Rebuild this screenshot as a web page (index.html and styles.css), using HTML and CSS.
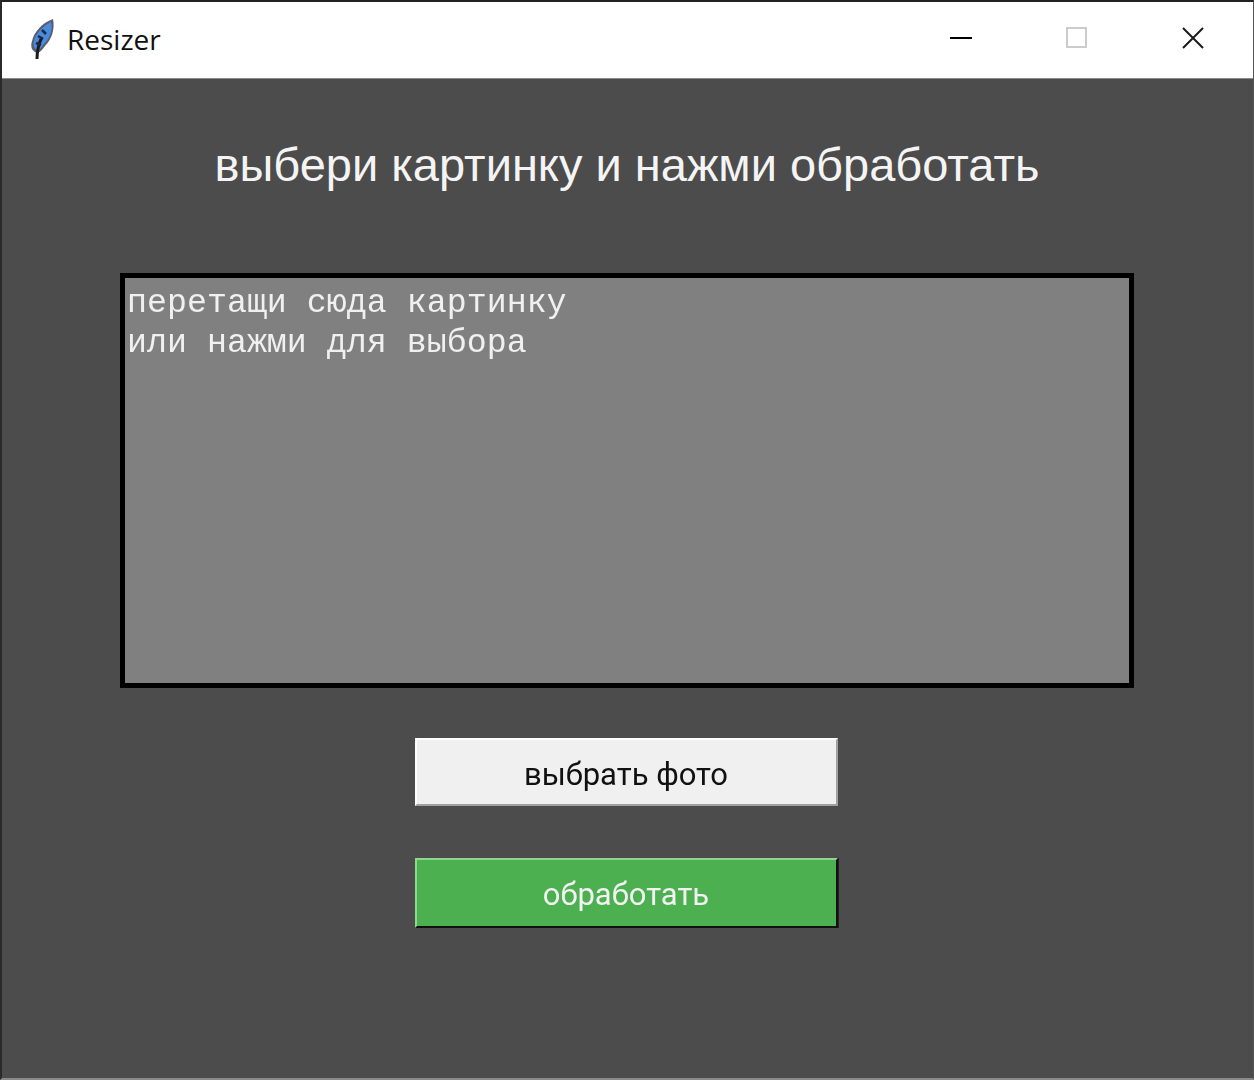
FILE: index.html
```html
<!DOCTYPE html>
<html lang="ru">
<head>
<meta charset="utf-8">
<title>Resizer</title>
<link rel="stylesheet" href="styles.css">
</head>
<body>
<div class="window">
  <header class="titlebar">
    <svg class="app-icon" width="28" height="42" viewBox="0 0 28 42" aria-hidden="true">
      <path class="quill-outline" d="M25 0 C27 10 24 20 17 27 C14 31 12 33 10 34 C4 33 2 28 4 22 C6 13 14 4 25 0Z"/>
      <path class="quill-vane" d="M23 3 C25 11 22 19 16 25 C14 28 12 30 10 31 C6 30 5 27 6 22 C8 14 15 7 23 3Z"/>
      <path class="quill-shaft" d="M9 40 C9 32 11 24 14 18"/>
      <path class="quill-mark" d="M8 24 L13 26 M10 17 L15 20 M14 11 L18 15"/>
    </svg>
    <span class="app-name">Resizer</span>
    <div class="controls">
      <div class="control"><svg width="22" height="22" viewBox="0 0 22 22"><path class="ctl-min" d="M0 11H22"/></svg></div>
      <div class="control"><svg width="22" height="22" viewBox="0 0 22 22"><rect class="ctl-max" x="1" y="1" width="19" height="19"/></svg></div>
      <div class="control"><svg width="22" height="22" viewBox="0 0 22 22"><path class="ctl-close" d="M1 1L21 21M21 1L1 21"/></svg></div>
    </div>
  </header>
  <main class="content">
    <h1 class="heading">выбери картинку и нажми обработать</h1>
    <div class="dropzone"><span class="soft">перетащи сюда картинку
или нажми для выбора</span></div>
    <button class="btn btn-light" type="button"><span class="soft">выбрать фото</span></button>
    <button class="btn btn-green" type="button"><span class="soft">обработать</span></button>
  </main>
</div>
</body>
</html>
```

FILE: styles.css
```css
* { box-sizing: border-box; }
html, body { margin: 0; padding: 0; }
body { width: 1254px; height: 1080px; overflow: hidden; background: #4c4c4c; }

.window {
  width: 1254px;
  height: 1080px;
  display: flex;
  flex-direction: column;
  border-top: 2px solid #222;
  border-left: 2px solid #2a2a2a;
  border-right: 1px solid #555;
  border-bottom: 2px solid #8a8a8a;
}

.titlebar {
  flex: 0 0 77px;
  display: flex;
  align-items: center;
  background: #fff;
  border-bottom: 1px solid #8a8a8a;
  padding-left: 26px;
}
.app-icon { flex: none; margin-top: -1px; }
.app-name {
  margin: -2px 0 0 11px;
  font: 28px "Open Sans", "Noto Sans", sans-serif;
  color: #111;
}
.quill-outline { fill: #56606e; }
.quill-vane { fill: #4a8ade; }
.quill-shaft { fill: none; stroke: #1c1c1c; stroke-width: 3; }
.quill-mark { fill: none; stroke: #1b2a40; stroke-width: 2.5; }

.controls { margin-left: auto; display: flex; margin-top: -5px; padding-right: 2px; }
.control { width: 116px; display: flex; justify-content: center; align-items: center; }
.control svg { display: block; }
.ctl-min { stroke: #000; stroke-width: 2; fill: none; }
.ctl-max { stroke: #ccc; stroke-width: 2; fill: none; }
.ctl-close { stroke: #1a1a1a; stroke-width: 2; fill: none; }

.content {
  flex: 1;
  display: flex;
  flex-direction: column;
  align-items: center;
  background: #4c4c4c;
  padding-right: 1px;
}
.heading {
  margin: 56px 0 0;
  height: 60px;
  font: 400 47px/60px "Liberation Sans", Arial, sans-serif;
  color: #f4f4f4;
  white-space: nowrap;
}
.dropzone {
  width: 1014px;
  height: 415px;
  margin-top: 78px;
  border: 5px solid #000;
  background: #808080;
  padding: 5px 2px;
  font: 33.3px/40px "Liberation Mono", "Courier New", monospace;
  color: #f0f0f0;
  white-space: pre;
}
.soft { filter: blur(0.4px); display: inline-block; }
.btn {
  display: block;
  width: 423px;
  margin-right: 2px;
  font: 31px "Roboto", "Liberation Sans", sans-serif;
}
.btn-light {
  height: 68px;
  margin-top: 50px;
  padding: 4px 0 0;
  background: #f0f0f0;
  color: #111;
  border: 2px solid;
  border-color: #fff #a0a0a0 #a0a0a0 #fff;
}
.btn-green {
  height: 70px;
  margin-top: 52px;
  padding: 2px 0 0;
  background: #4caf50;
  color: #f2f2f2;
  border: 2px solid;
  border-color: #8fd692 #111 #111 #8fd692;
  box-shadow: 1px 0 0 #222;
}
```
